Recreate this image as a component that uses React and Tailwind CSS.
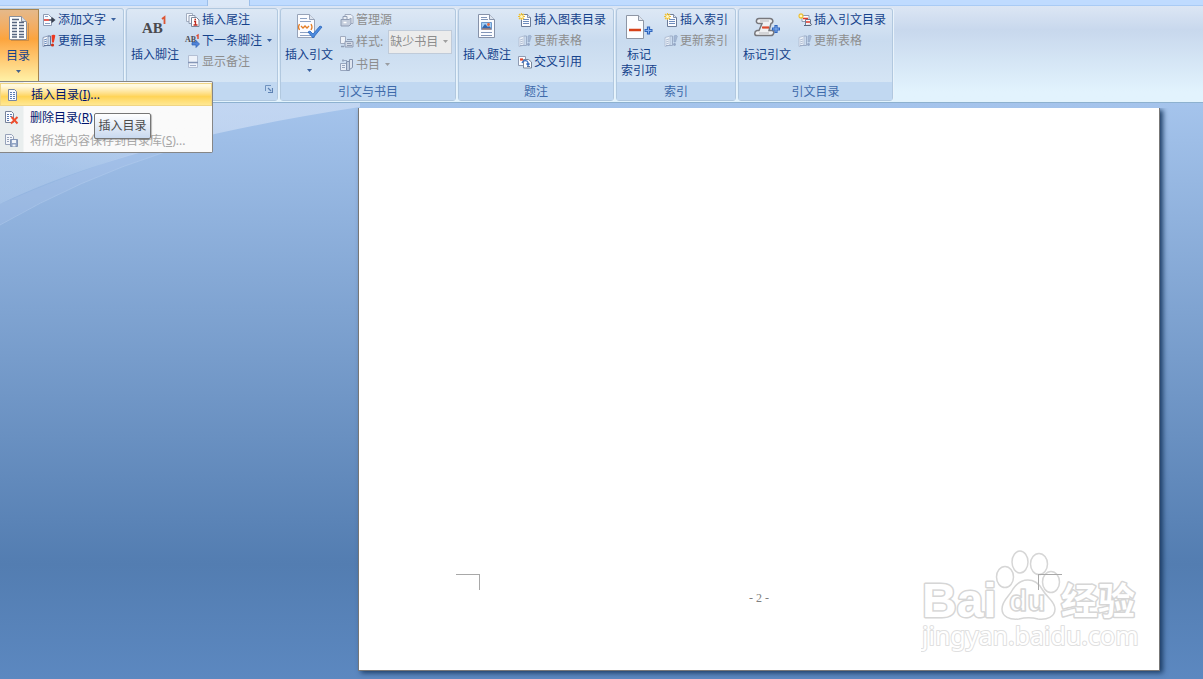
const FONT = "font-['Noto_Sans','Noto_Sans_CJK_SC',sans-serif]";

function DocLines({ x = 0, y = 0 }) {
  return (
    <g transform={`translate(${x} ${y})`}>
      <path d="M.5.5h6l3 3v9h-9z" fill="#fbfcff" stroke="#6c7c98" />
      <path d="M6.5.5v3h3" fill="#dfe6f2" stroke="#6c7c98" strokeWidth=".8" />
      <path d="M2 5.500h6M2 7.500h6M2 9.500h6" stroke="#5d7fb4" strokeWidth=".9" />
    </g>
  );
}

const smallArt = {
  addText: (
    <>
      <path d="M1.500 1.500h5l3 3v8h-8z" fill="#fbfcff" stroke="#8e9bb3" />
      <path d="M3 10.500h5M3 3.500h3" stroke="#8ba3c9" />
      <path d="M2 7h5" stroke="#e2372b" strokeWidth="1.600" />
      <path d="M7 7h3" stroke="#3b4353" strokeWidth="1.400" />
      <path d="M9.500 3.800 13.500 7l-4 3.200z" fill="#3b4353" />
    </>
  ),
  update: (
    <>
      <path d="M1 3.500 6 2v9l-5 1.500z" fill="#f6f9ff" stroke="#8e9db9" />
      <path d="M6 2h2.500v9.500H2" fill="none" stroke="#5f7397" />
      <path d="m2 6 3-1M2 8l3-1M2 10l3-1" stroke="#6e8fbe" />
      <path d="M9.500 1.500c1-1 3.500-.8 3.800.3L11.800 8.500H10z" fill="#ed3820" />
      <circle cx="10.500" cy="11" r="1.600" fill="#cf3017" />
    </>
  ),
  endnote: (
    <>
      <path d="M.5.5h6v8h-6z" fill="#f7faff" stroke="#a3aec1" />
      <path d="M3 2.500h6v8H3z" fill="#f7faff" stroke="#8f9bb0" />
      <path d="M5.500 4.500h5l2.500 2.500v6.500H5.500z" fill="#fff" stroke="#7a879b" />
      <path d="M8 8.500h1.500v3.500M7.500 12h4" fill="none" stroke="#bc2b20" strokeWidth="1.300" />
      <path d="M8.500 6.500h1.500" stroke="#bc2b20" strokeWidth="1.500" />
    </>
  ),
  nextNote: (
    <>
      <text x="-1" y="8" fontSize="8" fontWeight="700" fontFamily="Liberation Serif, serif" fill="#4b4b55">AB</text>
      <path d="m10.500 2 1.500-1v4" fill="none" stroke="#e0482c" strokeWidth="1.400" />
      <path d="M6 8.500h4V6.500l3.500 3.500L10 13.500v-2.500H6z" fill="#4f83d8" stroke="#2c5eb5" strokeWidth=".7" />
    </>
  ),
  showNotes: (
    <>
      <path d="M2.500.5h9v12h-9z" fill="#edf2fa" stroke="#b3bfd4" />
      <path d="M2 7.500h10" stroke="#8495b6" strokeWidth="1.500" />
      <path d="M4 10.500h6" stroke="#a2b0cb" />
    </>
  ),
  sources: (
    <>
      <path d="M5 1.500h6l2 2v7H5z" fill="#eef2f8" stroke="#a0abbf" />
      <path d="M1 6.500h8l2-1.500v6L9 13H1z" fill="#c5cedd" stroke="#909db4" />
      <path d="M3 6V3.500h4V6" fill="#e8edf5" stroke="#909db4" />
      <path d="M3.500 9.500h3" stroke="#fff" strokeWidth="1.500" />
    </>
  ),
  styleDoc: (
    <>
      <path d="M.5 1.500h5v7h-5z" fill="#eef2f8" stroke="#a0abbf" />
      <path d="M5 6.500h8v5.500H5z" fill="#d3dae6" stroke="#909db4" />
      <path d="M7 4.500h5M7 8.500h4M7 10.500h5" stroke="#8f9cb3" />
      <path d="M1 11.500h3" stroke="#8f9cb3" strokeWidth="1.500" />
    </>
  ),
  bibliography: (
    <>
      <path d="M.5 5.500h6v7h-6z" fill="#e7edf6" stroke="#98a6be" />
      <path d="M2 7.500h3M2 9.500h3M2 2.500h5M3 4V1" stroke="#98a6be" />
      <path d="M6.500 3.500h3v9h-3z" fill="#bfcbdd" stroke="#8594af" />
      <path d="M9.500 1.500h3v8l-3 2z" fill="#dfe6f0" stroke="#8594af" />
    </>
  ),
  newList: (
    <>
      <DocLines x={3} y={1} />
      <path d="M3.500 0v7M0 3.500h7M1 1l5 5M6 1 1 6" stroke="#f0c030" strokeWidth="1.200" />
      <circle cx="3.500" cy="3.500" r="1.500" fill="#fff7c5" />
    </>
  ),
  newAuthorities: (
    <>
      <path d="M4 2.500h7v6H4z" fill="#fff" stroke="#8e9bb3" />
      <path d="M7.500 6.500h5v6h-5z" fill="#f4f6fa" stroke="#6c7c98" />
      <path d="M5 5.500h5" stroke="#df3928" strokeWidth="1.600" />
      <path d="M8 9h4" stroke="#df3928" strokeWidth="1.500" />
      <path d="M6 12.500h6c2 0 2-2 0-2" fill="#d9dfe9" stroke="#59657a" />
      <path d="M3 0v6M0 3h6M1 1l4 4M5 1 1 5" stroke="#f0c030" strokeWidth="1.200" />
      <circle cx="3" cy="3" r="1.300" fill="#fff7c5" />
    </>
  ),
  updateOff: (
    <>
      <path d="M1 3.500 6 2v9l-5 1.500z" fill="#eaf0f8" stroke="#b3c0d5" />
      <path d="M6 2h2.500v9.500H2" fill="none" stroke="#9dadc7" />
      <path d="m2 6 3-1M2 8l3-1M2 10l3-1" stroke="#b3c0d5" />
      <path d="M10 2c1-1 3-.8 3.300.3L11.500 8H10z" fill="#a6b8d3" stroke="#8ba0c1" strokeWidth=".5" />
      <circle cx="10.500" cy="10.500" r="1.400" fill="#94a7c5" />
    </>
  ),
  crossRef: (
    <>
      <path d="M.5 1.500h7v9h-7z" fill="#fbfcff" stroke="#8e9bb3" />
      <path d="M2 4.500h3" stroke="#e0452e" strokeWidth="2.200" />
      <path d="M5.500 4.500h5l3 2.500v6h-8z" fill="#fbfcff" stroke="#7a879b" />
      <path d="M4 8c1-3 5-3 6-.5V10M8.500 8.500 10 10.300l1.500-1.800" fill="none" stroke="#356abf" strokeWidth="1.200" />
      <path d="M9 11.500h3" stroke="#5173a5" />
    </>
  ),
  tocDoc: (
    <>
      <path d="M2.500 1.500h6l2 2v9h-8z" fill="#f6f9ff" stroke="#7485a5" />
      <path d="M4 4.500h2m1 0h2M4 6.500h2m1 0h2M4 8.500h2m1 0h2M4 10.500h2m1 0h2" stroke="#5c7cb1" />
    </>
  ),
  tocDelete: (
    <>
      <path d="M.5.5h6l2 2v9h-8z" fill="#fbfcff" stroke="#76839a" />
      <path d="M2 3.500h2m1 0h2M2 5.500h2m1 0h2M2 7.500h2M2 9.500h2" stroke="#5c7cb1" />
      <path d="m6.500 6 6 6.500M12.500 6 6 12.500" stroke="#ef4e2c" strokeWidth="1.900" />
    </>
  ),
  tocSave: (
    <>
      <path d="M.5.5h6l2 2v8h-8z" fill="#f3f6fa" stroke="#96a3b9" />
      <path d="M2 3.500h2m1 0h2M2 5.500h2M2 7.500h2" stroke="#96a3b9" />
      <path d="M5.500 5.500h7v7h-7z" fill="#91a5c5" stroke="#8194b5" />
      <path d="M7 6h4v3H7zM7.500 10.500h3v2h-3z" fill="#f0f4fa" />
    </>
  ),
};

function SmallIcon({ name }) {
  return (
    <svg className="size-3.5 shrink-0 overflow-visible" viewBox="0 0 14 14" aria-hidden="true">
      {smallArt[name]}
    </svg>
  );
}

const largeArt = {
  toc: (
    <>
      <path d="M9 28.500h17.500V11" fill="none" stroke="#9d7144" strokeOpacity=".5" />
      <path d="M7.500 4.500h12l5 5v18h-17z" fill="#fdfdfd" stroke="#8a8f9a" />
      <path d="M19.500 4.500v5h5" fill="#d9dfe8" stroke="#8b909b" />
      <path d="M10 7.500h7M10 10.500h5m2 0h5M10 13.500h5m2 0h5M10 16.500h5m2 0h5M10 19.500h5m2 0h5M10 22.500h5m2 0h5M10 25h5m2 0h5" stroke="#56657f" strokeWidth="1.300" />
    </>
  ),
  footnote: (
    <>
      <text x="3" y="22" fontSize="15" fontWeight="700" fontFamily="Liberation Serif, serif" fill="#4a4a4d">AB</text>
      <path d="m23 8 2.500-2v7" fill="none" stroke="#dd5634" strokeWidth="1.800" />
    </>
  ),
  citation: (
    <>
      <path d="M4.500 3.500h12l5 5v18h-17z" fill="#fbfcff" stroke="#97a3b8" />
      <path d="M16.500 3.500v5h5" fill="#dce4ef" stroke="#97a3b8" />
      <path d="M7 7.500h7M7 10.500h11M7 21.500h11M7 24.500h11" stroke="#8da2c4" />
      <path d="M6.500 13q-2 3 0 6M18 13q2 3 0 6M8 15l2 2 2-2 2 2 2-2" fill="none" stroke="#e47d24" strokeWidth="1.300" />
      <path d="m15 21 5 6 9-11-2-1-7 8-3-3z" fill="#4b8ade" stroke="#2865bb" strokeWidth=".8" />
    </>
  ),
  caption: (
    <>
      <path d="M7.500 3.500h11l5 5v18h-16z" fill="#fbfcff" stroke="#8692a9" />
      <path d="M18.500 3.500v5h5" fill="#dce4ef" stroke="#8692a9" />
      <path d="M10 6.500h6M10 8.500h7M10 21.500h11M10 24.500h11" stroke="#8195b8" />
      <path d="M10.500 11.500h10v7h-10z" fill="#a5cff5" stroke="#6c97cb" />
      <path d="m11 17 3-4 3 3 1-1 2 2v1h-9z" fill="#3166af" />
      <circle cx="17.500" cy="13.500" r="1.400" fill="#e5673e" />
      <path d="M11 18h9" stroke="#e58d57" />
    </>
  ),
  indexEntry: (
    <>
      <path d="M3.500 4.500h12l5 5v18h-17z" fill="#fcfdff" stroke="#8e96a5" />
      <path d="M15.500 4.500v5h5" fill="#dfe5ee" stroke="#8e96a5" />
      <path d="M6 19h12" stroke="#d64119" strokeWidth="2.500" />
      <path d="M25.500 15.500v8M21.500 19.500h8" stroke="#2f65bd" strokeWidth="3.200" />
      <path d="M25.500 16.500v6M22.500 19.500h6" stroke="#87b2ef" />
    </>
  ),
  citeMark: (
    <>
      <path d="M8 7.500h11c3 0 4 4 1 5l-2 7h3c3 0 2 5-1 5H6c-3 0-3-4 0-5h2l3-7H8c-4 0-3-5 0-5Z" fill="#eff0f2" stroke="#77777c" strokeWidth="1.500" />
      <path d="M9 10h9M8 22h10" stroke="#b7b8bc" />
      <path d="M11 16.500h7" stroke="#dc4a2c" strokeWidth="2.200" />
      <path d="M25 14v8M21 18h8" stroke="#2f65bd" strokeWidth="3.200" />
      <path d="M25 15v6M22 18h6" stroke="#87b2ef" />
    </>
  ),
};

function Arrow({ className = '' }) {
  return (
    <svg className={`h-[3px] w-[5px] shrink-0 opacity-80 ${className}`} viewBox="0 0 5 3" aria-hidden="true">
      <path d="M0 0h5L2.500 3z" fill="currentColor" />
    </svg>
  );
}

function LargeButton({ icon, lines, arrow, active, narrow }) {
  return (
    <button
      type="button"
      className={[
        'flex h-[73px] shrink-0 flex-col items-center',
        narrow ? 'w-[42px]' : '',
        active
          ? 'w-[39px] border-t border-r border-[#a5844f] bg-linear-to-b from-[#e5b98a] via-[#fca43c] via-40% to-[#fff3a8] pr-0.5'
          : '',
        narrow || active ? '' : 'w-[54px]',
      ].join(' ')}
    >
      <svg className="mt-0.5 size-8 shrink-0" viewBox="0 0 32 32" aria-hidden="true">
        {largeArt[icon]}
      </svg>
      <span className="mt-1 leading-4">
        {lines.map((line) => (
          <span key={line} className="block whitespace-nowrap">{line}</span>
        ))}
      </span>
      {arrow ? <Arrow className="mt-1.5" /> : null}
    </button>
  );
}

function SmallButton({ icon, label, arrow, disabled }) {
  return (
    <button
      type="button"
      disabled={disabled}
      className="flex h-[21px] items-center gap-0.5 whitespace-nowrap disabled:text-[#8d8d8d]"
    >
      <SmallIcon name={icon} />
      <span>{label}</span>
      {arrow ? <Arrow className="ml-[3px]" /> : null}
    </button>
  );
}

function Group({ title, width, first, launcher, children }) {
  return (
    <section
      className={[
        'flex shrink-0 flex-col rounded-[3px] border border-[#b1c8df] bg-linear-to-b from-[#dde8f5] via-[#c9dbef] via-35% to-[#dae9f7] shadow-[1px_0_0_#e9f3fb]',
        first ? 'rounded-l-none border-l-0' : '',
        width,
      ].join(' ')}
    >
      <div className={['flex h-[73px] items-start', first ? 'gap-[3px]' : 'gap-1 pl-px'].join(' ')}>{children}</div>
      <div className="relative flex h-[19px] items-center justify-center bg-[#c1d8f1] pt-px text-[#3e6aaa]">
        {title ? <h2>{title}</h2> : null}
        {launcher ? (
          <button type="button" className="absolute top-[3px] right-1">
            <svg className="size-2" viewBox="0 0 8 8" aria-hidden="true">
              <path d="M.5 6V.5H6" fill="none" stroke="#6f92bf" />
              <path d="m3 3 3 3M7.500 3v4.500H3" fill="none" stroke="#5d82b3" strokeWidth="1.200" />
            </svg>
          </button>
        ) : null}
      </div>
    </section>
  );
}

function Ribbon() {
  return (
    <header>
      <div className="flex h-1.5 border-b border-[#a9cbf5] bg-[#bfdbff]">
        <span className="ml-[207px] h-1.5 w-[43px] border-x border-[#9dbfea] bg-[#dce8f7]" />
      </div>
      <div className="flex h-[97px] gap-0.5 border-b border-[#8db1cf] bg-linear-to-b from-[#dce6f4] via-[#c8d8ed] via-25% to-[#e2f3fd] to-90% pt-0.5 pb-px">
        <Group width="w-[124px]" first>
          <LargeButton icon="toc" lines={['目录']} arrow active />
          <div>
            <SmallButton icon="addText" label="添加文字" arrow />
            <SmallButton icon="update" label="更新目录" />
          </div>
        </Group>
        <Group width="w-[152px]" launcher>
          <LargeButton icon="footnote" lines={['插入脚注']} />
          <div>
            <SmallButton icon="endnote" label="插入尾注" />
            <SmallButton icon="nextNote" label="下一条脚注" arrow />
            <SmallButton icon="showNotes" label="显示备注" disabled />
          </div>
        </Group>
        <Group title="引文与书目" width="w-[176px]">
          <LargeButton icon="citation" lines={['插入引文']} arrow />
          <div>
            <SmallButton icon="sources" label="管理源" disabled />
            <div className="flex h-6 items-center gap-0.5 text-[#8d8d8d]">
              <SmallIcon name="styleDoc" />
              <label htmlFor="bib-style" className="whitespace-nowrap">样式:</label>
              <div className="relative ml-[3px]">
                <select
                  id="bib-style"
                  disabled
                  className="block h-6 w-16 appearance-none border border-[#c0cbd9] bg-[#ececec] pl-px text-[#8d8d8d] opacity-100"
                >
                  <option>缺少书目</option>
                </select>
                <Arrow className="pointer-events-none absolute top-2.5 right-1" />
              </div>
            </div>
            <SmallButton icon="bibliography" label="书目" arrow disabled />
          </div>
        </Group>
        <Group title="题注" width="w-[156px]">
          <LargeButton icon="caption" lines={['插入题注']} />
          <div>
            <SmallButton icon="newList" label="插入图表目录" />
            <SmallButton icon="updateOff" label="更新表格" disabled />
            <SmallButton icon="crossRef" label="交叉引用" />
          </div>
        </Group>
        <Group title="索引" width="w-[120px]">
          <LargeButton icon="indexEntry" lines={['标记', '索引项']} narrow />
          <div>
            <SmallButton icon="newList" label="插入索引" />
            <SmallButton icon="updateOff" label="更新索引" disabled />
          </div>
        </Group>
        <Group title="引文目录" width="w-[155px]">
          <LargeButton icon="citeMark" lines={['标记引文']} />
          <div>
            <SmallButton icon="newAuthorities" label="插入引文目录" />
            <SmallButton icon="updateOff" label="更新表格" disabled />
          </div>
        </Group>
      </div>
    </header>
  );
}

const menuItems = [
  { icon: 'tocDoc', label: '插入目录', hotkey: 'I', dots: true, active: true },
  { icon: 'tocDelete', label: '删除目录', hotkey: 'R' },
  { icon: 'tocSave', label: '将所选内容保存到目录库', hotkey: 'S', dots: true, disabled: true },
];

function TocMenu() {
  return (
    <div className="absolute top-[81px] left-0 z-20 w-[213px] rounded-r-xs border border-l-0 border-[#868686] bg-linear-to-r from-[#e9eeee] from-[23px] to-[#fafafa] to-[24px] pt-px">
      {menuItems.map((item) => (
        <button
          key={item.icon}
          type="button"
          disabled={item.disabled}
          className={[
            'flex h-[23px] w-full items-center gap-[11px] pl-[5px] text-[#00156e] disabled:text-[#a7a7a7]',
            item.active
              ? 'border border-[#f0d585] bg-linear-to-b from-[#fff9df] from-10% via-[#ffd456] via-60% to-[#ffe892]'
              : '',
          ].join(' ')}
        >
          <SmallIcon name={item.icon} />
          <span className="whitespace-nowrap">
            {item.label}(<u>{item.hotkey}</u>){item.dots ? '...' : ''}
          </span>
        </button>
      ))}
      <div
        role="tooltip"
        className="absolute top-[31px] left-[94px] flex h-[26px] w-[57px] items-center justify-center rounded-xs border border-[#767676] bg-linear-to-b from-white to-[#c9d9ef] whitespace-nowrap text-[#4c4c4c] shadow-[1px_1px_1px_#0004]"
      >
        插入目录
      </div>
    </div>
  );
}

function Watermark() {
  return (
    <svg
      className="absolute right-3.5 bottom-3.5 h-[110px] w-[224px]"
      viewBox="0 0 224 110"
      fill="#fff"
      stroke="#d6d6d6"
      strokeWidth="2"
      strokeLinejoin="round"
      aria-hidden="true"
    >
      <g fontWeight="700" paintOrder="stroke" strokeWidth="3">
        <text x="1" y="71" fontSize="48" fontFamily="Liberation Sans, sans-serif">Bai</text>
        <text x="140" y="69" fontSize="37" fontFamily="Noto Sans CJK SC, sans-serif">经验</text>
      </g>
      <g strokeWidth="1.500" fillOpacity=".6">
        <ellipse cx="84" cy="31" rx="8.500" ry="10.500" />
        <ellipse cx="99" cy="16" rx="8" ry="11" />
        <ellipse cx="118" cy="18" rx="8.500" ry="10.500" />
        <ellipse cx="130" cy="36" rx="8.500" ry="10.500" />
        <path d="M92 43c8-12 22-12 29 0 5 9 13 12 13 20 0 8-8 11-17 10-7-2-12-2-19 0-9 1-17-2-17-10 0-9 7-12 11-20Z" />
      </g>
      <text x="88" y="65" fontSize="30" fontWeight="700" fontFamily="Liberation Sans, sans-serif" strokeWidth="1.500">du</text>
      <text x="1" y="99" fontSize="25" fontFamily="Noto Sans, sans-serif" paintOrder="stroke" stroke="#e0e0e0">
        jingyan.baidu.com
      </text>
    </svg>
  );
}

function Workspace() {
  return (
    <main className="relative grid flex-1 grid-cols-[358px_1fr_43px] overflow-hidden bg-linear-to-b from-[#a5c4ec] via-[#537db1] via-80% to-[#5c88c0] pt-[5px] pb-2">
      <svg className="absolute top-0 left-0 h-[124px] w-[360px]" viewBox="0 0 360 124" aria-hidden="true">
        <defs>
          <linearGradient id="swoosh" x1="1" y1="0" x2="0" y2="1">
            <stop offset=".3" stopColor="#d5e2f6" stopOpacity=".6" />
            <stop offset=".75" stopColor="#c2d8f3" stopOpacity=".35" />
          </linearGradient>
        </defs>
        <path d="M0 0h360v4Q125 40 0 101Z" fill="url(#swoosh)" />
        <path d="M0 101Q75 69 145 46L165 49Q80 76 0 122Z" fill="#c7daf5" fillOpacity=".15" />
        <path d="M0 122Q80 76 165 49" fill="none" stroke="#c7daf5" strokeOpacity=".3" />
      </svg>
      <article className="relative col-start-2 flex flex-col justify-end border border-t-0 border-[#777] bg-white shadow-[3px_2px_5px_#1c3d66] [clip-path:inset(0_-12px_-12px_-4px)]">
        <Watermark />
        <div className="relative flex justify-between px-[97px]">
          <span className="h-4 w-6 border-t border-r border-[#a8a8a8]" />
          <span className="h-4 w-6 border-t border-l border-[#a8a8a8]" />
        </div>
        <p className="pb-16 text-center font-['Liberation_Serif',serif] leading-4 text-[#808080]">- 2 -</p>
      </article>
    </main>
  );
}

export default function App() {
  return (
    <div className={`relative flex min-h-screen flex-col text-xs text-[#15428b] ${FONT}`}>
      <Ribbon />
      <TocMenu />
      <Workspace />
    </div>
  );
}
